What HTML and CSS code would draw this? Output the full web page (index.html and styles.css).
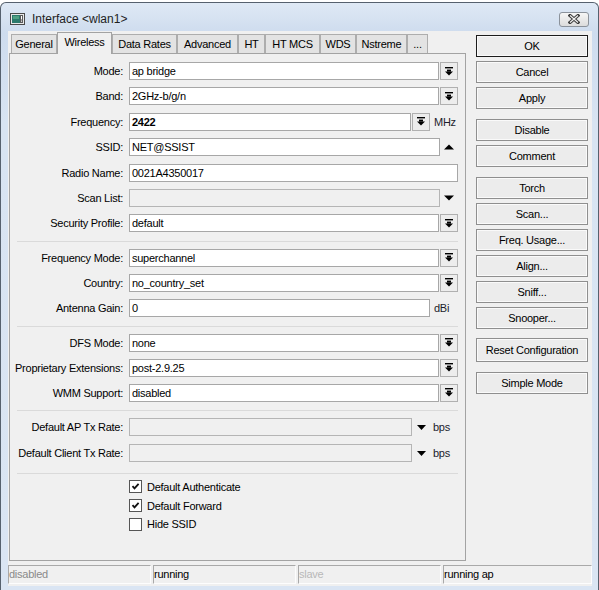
FILE: index.html
```html
<!DOCTYPE html>
<html lang="en">
<head>
    <meta charset="UTF-8">
    <title>Interface &lt;wlan1&gt;</title>
    <link rel="stylesheet" href="styles.css">
</head>
<body>
<div class="window">
    <div class="titlebar">
        <svg class="app-icon" width="15" height="12" viewBox="0 0 15 12">
            <rect x="0.5" y="0.5" width="14" height="11" fill="#e8e8e8" stroke="#4a4a4a"/>
            <rect x="2" y="2" width="8" height="8" fill="#2c7a6c"/>
            <rect x="3" y="3" width="6" height="3" fill="#4fa083"/>
            <rect x="10" y="2" width="3" height="8" fill="#5a5a5a"/>
            <rect x="11" y="3" width="1" height="3.5" fill="#fff"/>
            <rect x="11" y="7.5" width="1" height="1.2" fill="#fff"/>
        </svg>
        <span class="title">Interface &lt;wlan1&gt;</span>
        <div class="close-btn">
            <svg width="12" height="10" viewBox="0 0 12 10">
                <path d="M2 1.5L10 8.5M10 1.5L2 8.5" stroke="#3c3c3c" stroke-width="3.2" stroke-linecap="square"/>
                <path d="M2 1.5L10 8.5M10 1.5L2 8.5" stroke="#f2f2f2" stroke-width="1.1"/>
            </svg>
        </div>
    </div>

    <div class="client">
        <div class="main">
            <div class="tabs-area">
                <div class="tabs">
                    <div class="tab" style="width:46px">General</div>
                    <div class="tab active" style="width:55px">Wireless</div>
                    <div class="tab" style="width:65px">Data Rates</div>
                    <div class="tab" style="width:61px">Advanced</div>
                    <div class="tab" style="width:27px">HT</div>
                    <div class="tab" style="width:55px">HT MCS</div>
                    <div class="tab" style="width:36px">WDS</div>
                    <div class="tab" style="width:51px">Nstreme</div>
                    <div class="tab" style="width:21px">...</div>
                </div>

                <div class="panel">
                    <div class="group g1">
                        <div class="row">
                            <span class="lbl">Mode:</span>
                            <div class="fld">ap bridge</div>
                            <span class="drop"><svg width="8" height="9" viewBox="0 0 8 9"><rect width="8" height="1.4"/><rect x="2" y="2.6" width="4" height="2"/><path d="M0 4.4h8L4 8.6z"/></svg></span>
                        </div>
                        <div class="row">
                            <span class="lbl">Band:</span>
                            <div class="fld">2GHz-b/g/n</div>
                            <span class="drop"><svg width="8" height="9" viewBox="0 0 8 9"><rect width="8" height="1.4"/><rect x="2" y="2.6" width="4" height="2"/><path d="M0 4.4h8L4 8.6z"/></svg></span>
                        </div>
                        <div class="row">
                            <span class="lbl">Frequency:</span>
                            <div class="fld bold">2422</div>
                            <span class="drop"><svg width="8" height="9" viewBox="0 0 8 9"><rect width="8" height="1.4"/><rect x="2" y="2.6" width="4" height="2"/><path d="M0 4.4h8L4 8.6z"/></svg></span>
                            <span class="unit">MHz</span>
                        </div>
                        <div class="row">
                            <span class="lbl">SSID:</span>
                            <div class="fld">NET@SSIST</div>
                            <span class="arrow-box"><svg width="10" height="6" viewBox="0 0 10 6"><path d="M0 5.5h10L5 0.5z"/></svg></span>
                        </div>
                        <div class="row">
                            <span class="lbl">Radio Name:</span>
                            <div class="fld">0021A4350017</div>
                        </div>
                        <div class="row">
                            <span class="lbl">Scan List:</span>
                            <div class="fld off"></div>
                            <span class="arrow-box"><svg width="10" height="6" viewBox="0 0 10 6"><path d="M0 0.5h10L5 5.5z"/></svg></span>
                        </div>
                        <div class="row">
                            <span class="lbl">Security Profile:</span>
                            <div class="fld">default</div>
                            <span class="drop"><svg width="8" height="9" viewBox="0 0 8 9"><rect width="8" height="1.4"/><rect x="2" y="2.6" width="4" height="2"/><path d="M0 4.4h8L4 8.6z"/></svg></span>
                        </div>
                    </div>
                    <div class="sep"></div>

                    <div class="group g2">
                        <div class="row">
                            <span class="lbl">Frequency Mode:</span>
                            <div class="fld">superchannel</div>
                            <span class="drop"><svg width="8" height="9" viewBox="0 0 8 9"><rect width="8" height="1.4"/><rect x="2" y="2.6" width="4" height="2"/><path d="M0 4.4h8L4 8.6z"/></svg></span>
                        </div>
                        <div class="row">
                            <span class="lbl">Country:</span>
                            <div class="fld">no_country_set</div>
                            <span class="drop"><svg width="8" height="9" viewBox="0 0 8 9"><rect width="8" height="1.4"/><rect x="2" y="2.6" width="4" height="2"/><path d="M0 4.4h8L4 8.6z"/></svg></span>
                        </div>
                        <div class="row">
                            <span class="lbl">Antenna Gain:</span>
                            <div class="fld">0</div>
                            <span class="unit">dBi</span>
                        </div>
                    </div>
                    <div class="sep"></div>

                    <div class="group g3">
                        <div class="row">
                            <span class="lbl">DFS Mode:</span>
                            <div class="fld">none</div>
                            <span class="drop"><svg width="8" height="9" viewBox="0 0 8 9"><rect width="8" height="1.4"/><rect x="2" y="2.6" width="4" height="2"/><path d="M0 4.4h8L4 8.6z"/></svg></span>
                        </div>
                        <div class="row">
                            <span class="lbl">Proprietary Extensions:</span>
                            <div class="fld">post-2.9.25</div>
                            <span class="drop"><svg width="8" height="9" viewBox="0 0 8 9"><rect width="8" height="1.4"/><rect x="2" y="2.6" width="4" height="2"/><path d="M0 4.4h8L4 8.6z"/></svg></span>
                        </div>
                        <div class="row">
                            <span class="lbl">WMM Support:</span>
                            <div class="fld">disabled</div>
                            <span class="drop"><svg width="8" height="9" viewBox="0 0 8 9"><rect width="8" height="1.4"/><rect x="2" y="2.6" width="4" height="2"/><path d="M0 4.4h8L4 8.6z"/></svg></span>
                        </div>
                    </div>
                    <div class="sep"></div>

                    <div class="group g4">
                        <div class="row">
                            <span class="lbl">Default AP Tx Rate:</span>
                            <div class="fld off"></div>
                            <span class="rate-suffix"><svg width="9" height="5" viewBox="0 0 9 5"><path d="M0 0h9L4.5 5z"/></svg><span>bps</span></span>
                        </div>
                        <div class="row">
                            <span class="lbl">Default Client Tx Rate:</span>
                            <div class="fld off"></div>
                            <span class="rate-suffix"><svg width="9" height="5" viewBox="0 0 9 5"><path d="M0 0h9L4.5 5z"/></svg><span>bps</span></span>
                        </div>
                    </div>
                    <div class="sep"></div>

                    <div class="checks">
                        <div class="check-row">
                            <span class="box"><svg width="11" height="11" viewBox="0 0 11 11"><path d="M2.5 5.2L4.5 7.4L8.6 2.8" fill="none" stroke="#111" stroke-width="1.8"/></svg></span>
                            Default Authenticate
                        </div>
                        <div class="check-row">
                            <span class="box"><svg width="11" height="11" viewBox="0 0 11 11"><path d="M2.5 5.2L4.5 7.4L8.6 2.8" fill="none" stroke="#111" stroke-width="1.8"/></svg></span>
                            Default Forward
                        </div>
                        <div class="check-row">
                            <span class="box"></span>
                            Hide SSID
                        </div>
                    </div>
                </div>
            </div>

            <div class="side">
                <div class="btn default">OK</div>
                <div class="btn">Cancel</div>
                <div class="btn">Apply</div>
                <div class="btn spaced">Disable</div>
                <div class="btn">Comment</div>
                <div class="btn spaced">Torch</div>
                <div class="btn">Scan...</div>
                <div class="btn">Freq. Usage...</div>
                <div class="btn">Align...</div>
                <div class="btn">Sniff...</div>
                <div class="btn">Snooper...</div>
                <div class="btn spaced tall">Reset Configuration</div>
                <div class="btn spaced">Simple Mode</div>
            </div>
        </div>

        <div class="statusbar">
            <div class="cell dim">disabled</div>
            <div class="cell">running</div>
            <div class="cell faint">slave</div>
            <div class="cell wide">running ap</div>
        </div>
    </div>
</div>
</body>
</html>
```

FILE: styles.css
```css
* {
    box-sizing: border-box;
}

body {
    margin: 0;
    background: #ffffff;
    font-family: "Liberation Sans", Arial, sans-serif;
    font-size: 11px;
    letter-spacing: -0.25px;
    color: #000;
}

/* window frame */
.window {
    width: 599px;
    height: 588px;
    margin-top: 2px;
    border: 1px solid #56616e;
    border-bottom: none;
    border-radius: 6px 6px 0 0;
    background: linear-gradient(#dfe9f5, #cedcee 30px, #d8e4f2 120px, #dae5f3);
    padding: 0 6px 4px 7px;
    display: flex;
    flex-direction: column;
}

.titlebar {
    height: 28px;
    padding-top: 3px;
    display: flex;
    align-items: center;
}

.app-icon {
    margin-left: 2px;
    margin-right: 7px;
}

.title {
    font-size: 12px;
    letter-spacing: 0;
    color: #1e1e1e;
    flex: 1;
}

.close-btn {
    width: 30px;
    height: 15px;
    margin-right: 3px;
    margin-top: 1px;
    border: 1px solid #8b929b;
    border-radius: 3px;
    background: linear-gradient(#f6f6f6, #dcdcdc);
    display: flex;
    align-items: center;
    justify-content: center;
}

/* client area */
.client {
    height: 555px;
    background: #f0f0f0;
    display: flex;
    flex-direction: column;
}

.main {
    height: 532px;
    display: flex;
    align-items: flex-start;
}

.tabs-area {
    width: 458px;
    padding-left: 1px;
}

.tabs {
    display: flex;
    align-items: flex-end;
    height: 23px;
    margin-bottom: -1px;
    padding-left: 2px;
    position: relative;
    z-index: 1;
}

.tab {
    height: 19px;
    margin-bottom: 1px;
    border: 1px solid #adadad;
    border-bottom: none;
    background: #e3e3e3;
    text-align: center;
    line-height: 18px;
    white-space: nowrap;
}

.tab.active {
    height: 22px;
    margin-bottom: 0;
    background: #f0f0f0;
    line-height: 19px;
    border-color: #a3a3a3;
}

.panel {
    height: 508px;
    border: 1px solid #a3a3a3;
    background: #f0f0f0;
}

.group {
    display: flex;
    flex-direction: column;
    gap: 7px;
    padding: 7px 7px 9px 0;
}

.group.g1 {
    gap: 7.4px;
    padding-top: 8px;
    padding-bottom: 8.6px;
}

.group.g3 {
    padding-bottom: 8.4px;
}

.group.g4 {
    gap: 8px;
    padding-bottom: 10.3px;
}

.sep {
    height: 1px;
    margin: 0 7px;
    background: #dadada;
}

.row {
    display: flex;
    align-items: center;
    height: 18px;
}

.lbl {
    width: 113px;
    margin-right: 6px;
    text-align: right;
    white-space: nowrap;
}

.fld {
    flex: 1;
    height: 18px;
    border: 1px solid #a7a7a7;
    background: #ffffff;
    padding-left: 2px;
    line-height: 16px;
    white-space: nowrap;
}

.fld.bold {
    font-weight: bold;
}

.fld.off {
    background: #f0f0f0;
    border-color: #b5b5b5;
}

.drop {
    width: 18px;
    height: 18px;
    margin-left: 1px;
    border: 1px solid #b0b0b0;
    background: #ededed;
    display: flex;
    align-items: center;
    justify-content: center;
}

.arrow-box {
    width: 18px;
    height: 18px;
    display: flex;
    align-items: center;
    justify-content: center;
}

.unit {
    width: 28px;
    padding-left: 4px;
    color: #1c1c2c;
}

.rate-suffix {
    width: 46px;
    display: flex;
    align-items: center;
    padding-left: 5px;
}

.rate-suffix span {
    margin-left: 7px;
    color: #1c1c2c;
}

.checks {
    display: flex;
    flex-direction: column;
    gap: 5.7px;
    padding: 6.7px 0 0 119px;
}

.check-row {
    display: flex;
    align-items: center;
    height: 13px;
}

.box {
    width: 13px;
    height: 13px;
    margin-right: 5px;
    border: 1px solid #555;
    background: #fff;
    display: flex;
    align-items: center;
    justify-content: center;
}

/* button column */
.side {
    width: 112px;
    margin-left: 10px;
    padding-top: 4px;
    display: flex;
    flex-direction: column;
}

.btn {
    height: 22px;
    margin-bottom: 4px;
    border: 1px solid #8f8f8f;
    background: #ececec;
    box-shadow: inset 0 0 0 1px #fafafa;
    text-align: center;
    line-height: 20px;
    white-space: nowrap;
}

.btn.default {
    border-color: #1c1c1c;
}

.btn.spaced {
    margin-top: 6px;
}

.btn.tall {
    height: 24px;
    line-height: 22px;
    margin-top: 5px;
}

/* status bar */
.statusbar {
    height: 23px;
    padding: 2px 0;
    display: flex;
    gap: 2px;
}

.cell {
    width: 143px;
    height: 19px;
    border: 1px solid #a9a9a9;
    border-right-color: #fdfdfd;
    border-bottom-color: #fdfdfd;
    line-height: 17px;
    white-space: nowrap;
}

.cell.wide {
    flex: 1;
}

.cell.dim {
    color: #8a8a8a;
}

.cell.faint {
    color: #b8b8b8;
}
```
